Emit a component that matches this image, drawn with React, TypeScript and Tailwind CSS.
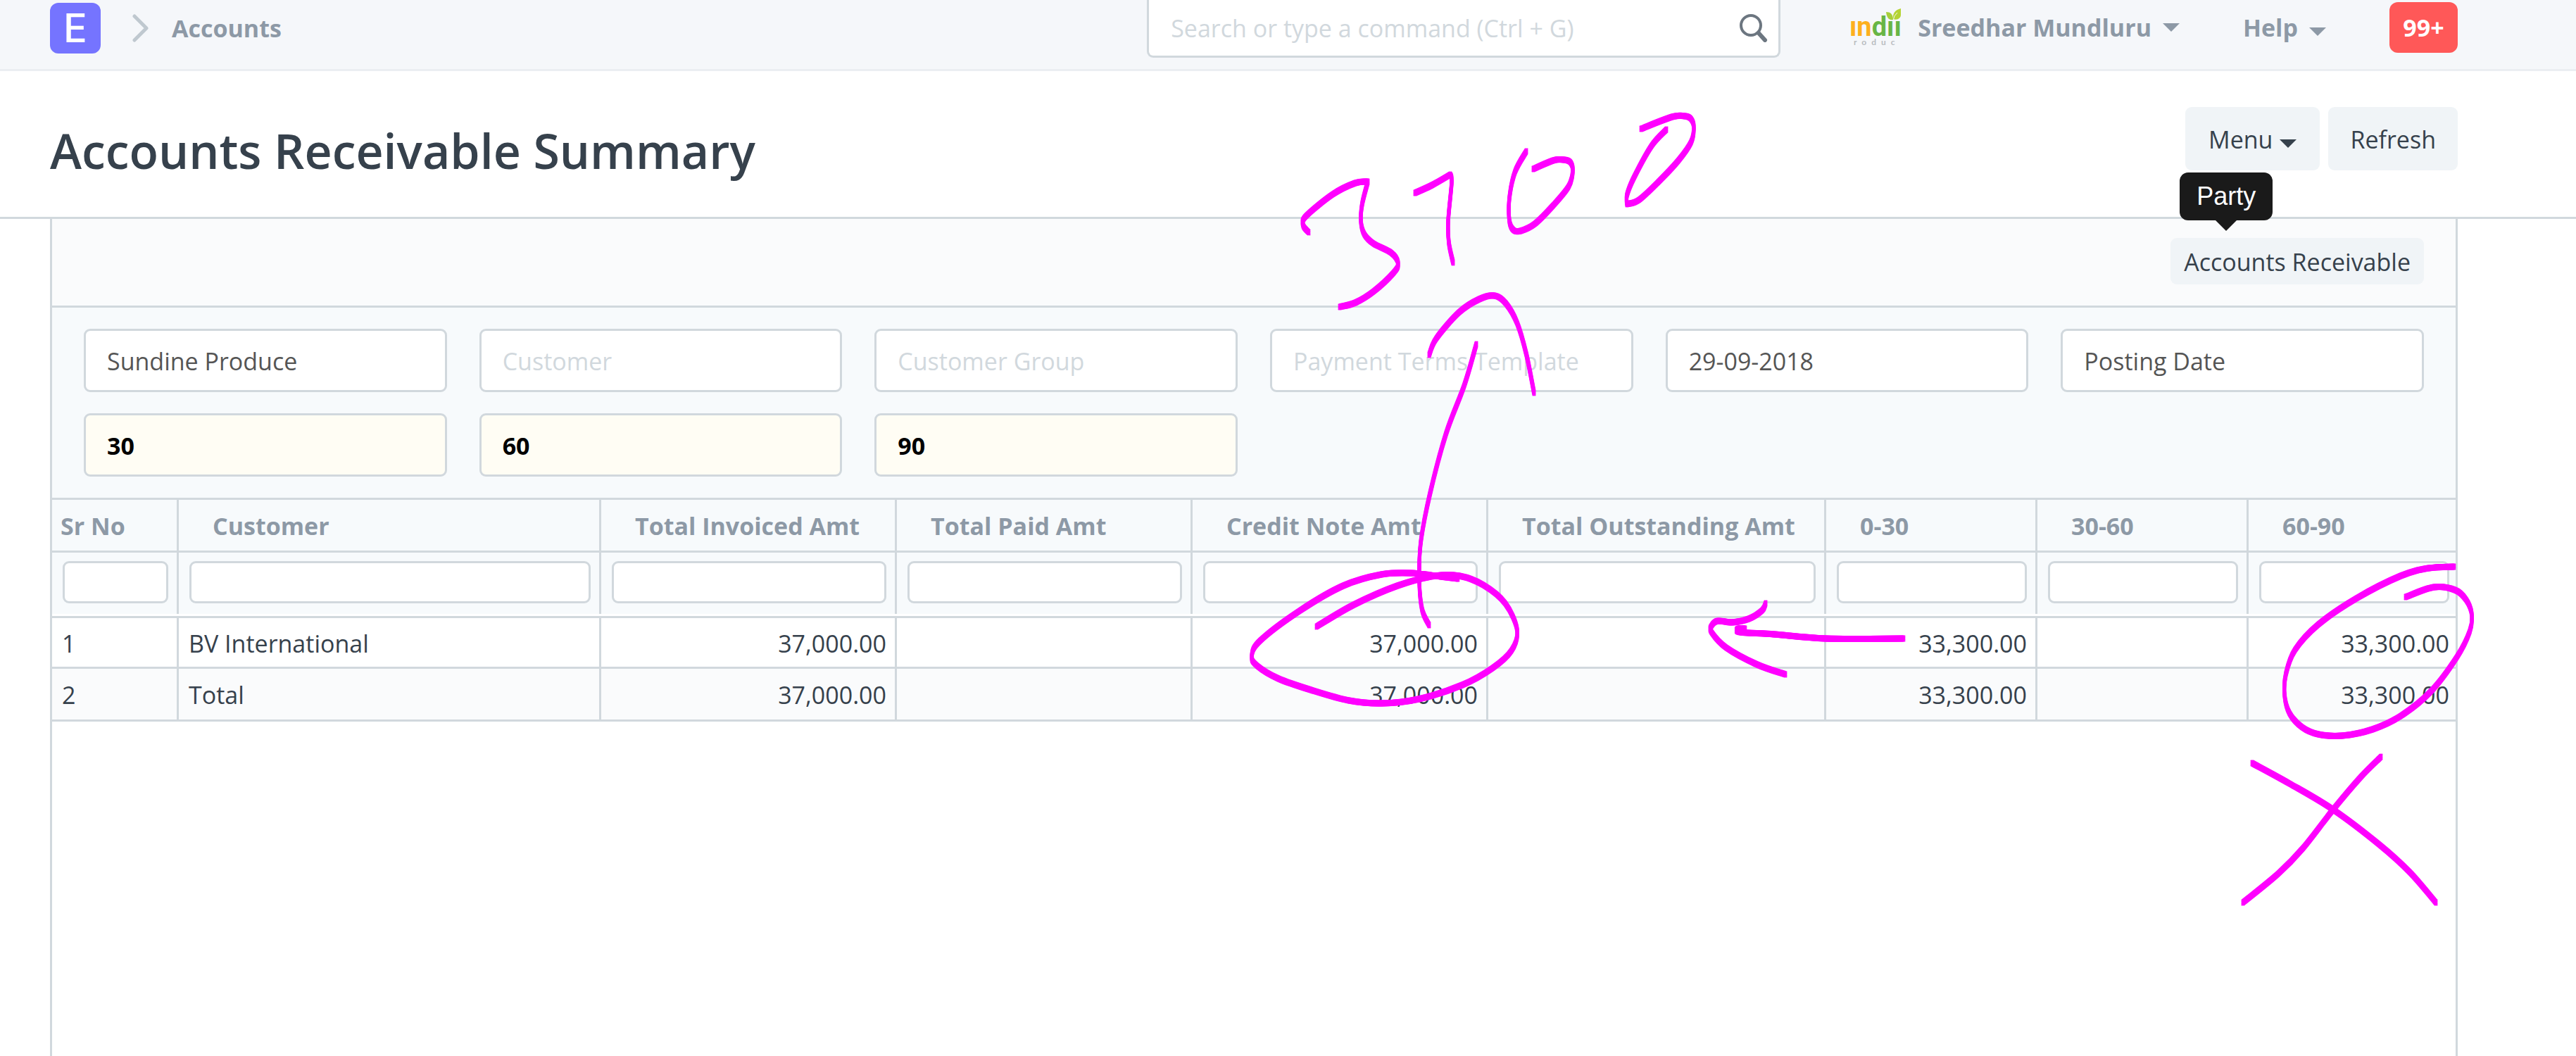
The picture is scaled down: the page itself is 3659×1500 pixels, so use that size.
import { useId } from "react";

type Point = [number, number];

/* Pen strokes drawn over the report, as points along each line. */
const strokes: Point[][] = [
  // digits
  [[1859, 330], [1851, 320], [1855, 307], [1893, 276], [1925, 260], [1943, 258]],
  [[1943, 258], [1935, 289], [1933, 314], [1938, 333], [1951, 346], [1976, 359], [1986, 374], [1979, 388], [1951, 414], [1925, 430], [1903, 436]],
  [[2010, 274], [2034, 263], [2060, 248]],
  [[2060, 248], [2062, 259], [2057, 314], [2058, 345], [2064, 373]],
  [[2168, 215], [2152, 244], [2144, 281], [2144, 314], [2150, 327], [2160, 328], [2180, 318], [2206, 292], [2228, 265], [2234, 244], [2231, 231], [2222, 227], [2206, 228], [2178, 240]],
  [[2367, 184], [2346, 207], [2321, 252], [2311, 277], [2311, 290]],
  [[2311, 290], [2328, 284], [2356, 258], [2384, 228], [2402, 202], [2406, 181], [2402, 169], [2394, 165], [2375, 166], [2331, 183]],
  // upward arrow
  [[2030, 504], [2040, 481], [2072, 444], [2101, 425], [2123, 420], [2139, 431], [2155, 459], [2168, 503], [2179, 558]],
  [[2097, 489], [2080, 547], [2054, 616], [2031, 702], [2018, 771], [2016, 825], [2020, 866], [2030, 888]],
  // ring around the credit note amounts
  [[1870, 890], [1923, 859], [1985, 832], [2038, 818], [2073, 818], [2107, 831], [2138, 857], [2155, 895], [2147, 924], [2120, 949], [2077, 973], [2015, 993], [1962, 999], [1916, 995], [1862, 980], [1816, 964], [1786, 946], [1778, 932], [1790, 910], [1847, 867], [1908, 832], [1962, 816], [2004, 814], [2046, 819], [2071, 822]],
  // left arrow
  [[2704, 907], [2593, 907], [2520, 901], [2472, 898], [2468, 893], [2479, 893]],
  [[2508, 857], [2503, 867], [2484, 879], [2460, 884], [2440, 882], [2431, 889], [2431, 898], [2452, 920], [2496, 944], [2536, 958]],
  // ring around the 60-90 amounts
  [[3486, 805], [3450, 807], [3410, 818], [3347, 850], [3293, 887], [3260, 923], [3247, 957], [3245, 987], [3252, 1013], [3270, 1033], [3293, 1043], [3327, 1045], [3370, 1036], [3410, 1017], [3453, 982], [3490, 933], [3508, 897], [3511, 873], [3503, 852], [3487, 838], [3457, 834], [3417, 848]],
  // cross
  [[3199, 1084], [3252, 1113], [3314, 1150], [3380, 1200], [3423, 1239], [3460, 1282]],
  [[3382, 1075], [3353, 1104], [3314, 1150], [3271, 1205], [3236, 1241], [3186, 1282]],
];

function smooth(p: Point[]) {
  let d = `M${p[0][0]} ${p[0][1]}`;
  for (let i = 0; i < p.length - 1; i++) {
    const a = p[i - 1] ?? p[i];
    const b = p[i];
    const c = p[i + 1];
    const e = p[i + 2] ?? c;
    d += `C${b[0] + (c[0] - a[0]) / 6} ${b[1] + (c[1] - a[1]) / 6} ${c[0] - (e[0] - b[0]) / 6} ${c[1] - (e[1] - b[1]) / 6} ${c[0]} ${c[1]}`;
  }
  return d;
}

const inkPath = strokes.map(smooth).join("");

/* The nib is a tall rectangle, so the line is laid down once for each part of it. */
const nib: Point[] = [-3.5, -1.75, 0, 1.75, 3.5].flatMap((y): Point[] => [[-1.5, y], [0, y], [1.5, y]]);

function Ink() {
  return (
    <svg viewBox="0 0 3659 1500" className="pointer-events-none absolute top-0 left-0 z-20 h-auto w-full" fill="none" stroke="#ff00ff" strokeWidth="2" strokeLinecap="round" strokeLinejoin="round" aria-hidden="true">
      {nib.map(([x, y]) => (
        <path key={`${x},${y}`} d={inkPath} transform={`translate(${x} ${y})`} />
      ))}
    </svg>
  );
}

function Caret({ className = "" }: { className?: string }) {
  return (
    <svg viewBox="0 0 24 12" className={`h-3 w-6 shrink-0 fill-current ${className}`} aria-hidden="true">
      <path d="M0 0H24L12 12Z" />
    </svg>
  );
}

function CompanyLogo() {
  return (
    <svg viewBox="0 0 72 72" className="h-[72px] w-[72px] shrink-0 overflow-hidden" aria-hidden="true">
      <text x="-1" y="48" className="font-['Roboto',sans-serif] text-[38px] font-bold">
        <tspan fill="#fdb01e">ın</tspan>
        <tspan fill="#68b545">dıı</tspan>
      </text>
      <path d="M51 14C57 14 61 17 61 25C54 26 52 21 51 14Z" fill="#a8cf3a" />
      <path d="M72 9C64 11 60 16 61 24C67 26 72 23 72 18Z" fill="#b5d334" />
      <path d="M61 26Q62 19 67 15" stroke="#f5f7fa" fill="none" />
      <text x="5" y="61" fill="#b9bcc0" className="font-['Lato',sans-serif] text-[12px] tracking-[7px]">roduc</text>
    </svg>
  );
}

function Navbar() {
  return (
    <nav className="flex h-[101px] items-start border-b-[3px] border-[#ebeef2] bg-[#f5f7fa] pr-[168px] pl-[71px] font-bold text-[#8d99a6]">
      <div className="flex h-20 items-center">
        <a href="#home" aria-label="Home" className="flex h-[72px] w-[72px] items-center justify-center rounded-xl bg-[#7574ff] font-['Inter',sans-serif] text-[56px] font-medium text-white">
          E
        </a>
        <svg viewBox="0 0 24 40" className="mr-8 ml-[45px] h-10 w-6" fill="none" stroke="#bfc8cf" strokeWidth="5" strokeLinecap="round" strokeLinejoin="round" aria-hidden="true">
          <path d="M3 3L20 20L3 37" />
        </svg>
        <a href="#accounts">Accounts</a>
      </div>
      <label className="mr-[99px] ml-auto flex h-[82px] w-[900px] items-center rounded-b-[9px] border-3 border-t-0 border-[#d1d8dd] bg-white pr-[15px] pl-[31px] font-normal">
        <input type="search" aria-label="Search" placeholder="Search or type a command (Ctrl + G)" className="min-w-0 flex-1 bg-transparent outline-none placeholder:text-[#d1d8dd]" />
        <svg viewBox="0 0 40 40" className="h-10 w-10" fill="none" stroke="#6c7680" strokeLinecap="round" aria-hidden="true">
          <circle cx="16" cy="16" r="14" strokeWidth="4" />
          <path d="M27 27L36 37" strokeWidth="6" />
        </svg>
      </label>
      <div className="flex h-[78px] items-center">
        <button type="button" className="flex items-center">
          <CompanyLogo />
          <span className="ml-6">Sreedhar Mundluru</span>
          <Caret className="ml-4" />
        </button>
        <button type="button" className="ml-[90px] flex items-center">
          Help
          <Caret className="mt-3 ml-4" />
        </button>
        <button type="button" aria-label="Notifications" className="ml-[90px] flex h-[72px] w-[97px] items-center justify-center rounded-xl bg-[#ff5858] text-white">
          99+
        </button>
      </div>
    </nav>
  );
}

function PageHeader() {
  return (
    <header className="flex h-[210px] items-start justify-between border-b-[3px] border-[#d1d8dd] bg-white pt-[51px] pr-[168px] pl-[71px]">
      <h1 className="pt-4 text-[68px] leading-[92px] font-semibold text-[#36414c]">Accounts Receivable Summary</h1>
      <div className="flex gap-3">
        <button type="button" className="flex h-[90px] items-center gap-[10px] rounded-[9px] bg-[#f0f4f7] px-[33px] pt-[2px]">
          Menu
          <Caret className="mt-3" />
        </button>
        <button type="button" className="h-[90px] rounded-[9px] bg-[#f0f4f7] px-[31px] pt-[2px]">Refresh</button>
      </div>
    </header>
  );
}

const field = "h-[90px] w-full min-w-0 appearance-none rounded-[9px] border-3 border-[#d1d8dd] px-[30px] pt-[2px] outline-none placeholder:text-[#d1d8dd]";

function Filters() {
  return (
    <form className="grid grid-cols-6 gap-x-[46px] gap-y-[30px] border-b-[3px] border-[#d1d8dd] bg-[#f7fafc] px-[45px] py-[30px] text-[#555555]">
      <input aria-label="Company" defaultValue="Sundine Produce" className={`${field} bg-white`} />
      <input aria-label="Customer" placeholder="Customer" className={`${field} bg-white`} />
      <input aria-label="Customer Group" placeholder="Customer Group" className={`${field} bg-white`} />
      <input aria-label="Payment Terms Template" placeholder="Payment Terms Template" className={`${field} bg-white`} />
      <input aria-label="Date" defaultValue="29-09-2018" className={`${field} bg-white`} />
      <select aria-label="Ageing Based On" className={`${field} bg-white`}>
        <option>Posting Date</option>
      </select>
      {["30", "60", "90"].map((days, i) => (
        <input key={days} aria-label={`Ageing Range ${i + 1}`} defaultValue={days} className={`${field} bg-[#fffdf4] font-bold text-black`} />
      ))}
    </form>
  );
}

const columns = ["Sr No", "Customer", "Total Invoiced Amt", "Total Paid Amt", "Credit Note Amt", "Total Outstanding Amt", "0-30", "30-60", "60-90"];

const rows = [
  ["1", "BV International", "37,000.00", "", "37,000.00", "", "33,300.00", "", "33,300.00"],
  ["2", "Total", "37,000.00", "", "37,000.00", "", "33,300.00", "", "33,300.00"],
];

function ReportTable() {
  const id = useId();
  return (
    <table className="w-full table-fixed border-separate border-spacing-0 whitespace-nowrap">
      <colgroup>
        <col className="w-[180px]" />
        <col className="w-[600px]" />
        <col className="w-[420px]" />
        <col className="w-[420px]" />
        <col className="w-[420px]" />
        <col className="w-[480px]" />
        <col className="w-[300px]" />
        <col className="w-[300px]" />
        <col />
      </colgroup>
      <thead className="bg-[#f7fafc] text-left text-[#8d99a6]">
        <tr>
          {columns.map((name) => (
            <th key={name} id={`${id}${name}`} scope="col" className="h-[75px] border-r-[3px] border-b-[3px] border-[#d1d8dd] p-0 pt-[2px] pl-12 font-bold first:pl-3 last:border-r-0">
              {name}
            </th>
          ))}
        </tr>
        <tr>
          {columns.map((name) => (
            <td key={name} className="border-r-[3px] border-[#d1d8dd] px-[15px] pt-3 pb-[15px] align-top not-last:pr-3 last:border-r-0 last:pr-[9px]">
              <input aria-labelledby={`${id}${name}`} className="block h-[60px] w-full min-w-0 rounded-[9px] border-3 border-[#d1d8dd] bg-white px-3 font-normal outline-none" />
            </td>
          ))}
        </tr>
      </thead>
      <tbody>
        <tr aria-hidden="true">
          <td colSpan={9} className="h-[6px] border-b-[3px] border-[#d1d8dd] p-0" />
        </tr>
        {rows.map((row, r) => (
          <tr key={row[0]} className={r === 0 ? "h-[72px] bg-white" : "h-[75px] bg-[#fafbfc]"}>
            {row.map((value, c) => (
              <td key={columns[c]} className={`border-r-[3px] border-b-[3px] border-[#d1d8dd] pt-[2px] pr-3 pb-0 pl-[14px] last:border-r-0 last:pr-[9px] ${c > 1 ? "text-right" : ""}`}>
                {value}
              </td>
            ))}
          </tr>
        ))}
      </tbody>
    </table>
  );
}

export default function App() {
  return (
    <div className="relative flex min-h-screen flex-col overflow-hidden bg-white font-['Open_Sans','Noto_Sans',sans-serif] text-[34px] leading-[46px] text-[#36414c]">
      <Navbar />
      <PageHeader />
      <main className="mr-[168px] ml-[71px] flex-1 border-x-[3px] border-[#d1d8dd]">
        <div className="flex justify-end border-b-[3px] border-[#d1d8dd] bg-[#fafbfc] pt-[27px] pr-[45px] pb-[30px]">
          <div className="relative">
            <button type="button" aria-describedby="party-tip" className="h-[66px] rounded-[9px] bg-[#f0f4f7] px-[19px] pt-[2px]">
              Accounts Receivable
            </button>
            <div id="party-tip" role="tooltip" className="absolute bottom-full left-[13px] z-10 mb-[10px] flex flex-col items-center">
              <span className="flex h-[68px] items-center rounded-xl bg-[#1a1a1a] px-6 font-['Liberation_Sans',sans-serif] text-[36px] text-white">Party</span>
              <svg viewBox="0 0 30 15" className="h-[15px] w-[30px] fill-[#1a1a1a]" aria-hidden="true">
                <path d="M0 0H30L15 15Z" />
              </svg>
            </div>
          </div>
        </div>
        <Filters />
        <ReportTable />
      </main>
      <Ink />
    </div>
  );
}
